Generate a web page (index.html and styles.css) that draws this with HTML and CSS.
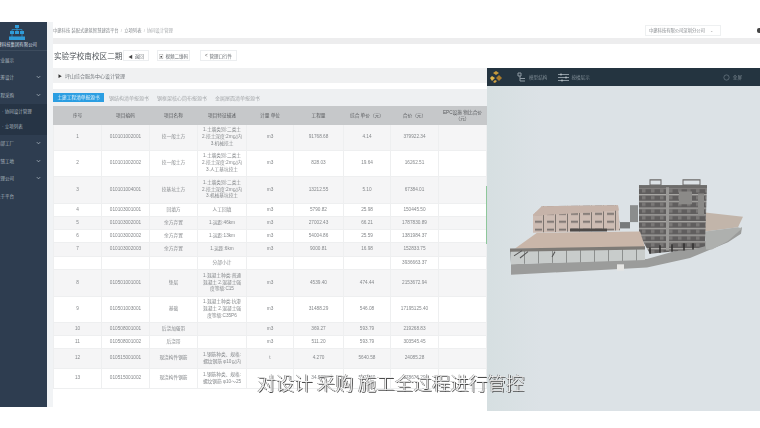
FILE: index.html
```html
<!DOCTYPE html>
<html lang="zh">
<head>
<meta charset="utf-8">
<title>实验学校南校区二期</title>
<link rel="stylesheet" href="styles.css">
</head>
<body>
<div class="screen">
  <div class="app">
    <aside class="sidebar">
      <div class="brand">
        <svg class="brand-mark" viewBox="0 0 18 17"><path d="M7 1h4v3H7zM2 7h4v3H2zM7 7h4v3H7zM12 7h4v3h-4zM1 12.500h16v3.500H1z" fill="#2f9bd8"/><path d="M9 4v3M4 7V5.500h10V7M4 10v3M14 10v3" stroke="#2f9bd8" fill="none" stroke-width=".7"/></svg>
        <div class="brand-name">中建科技集团有限公司</div>
      </div>
      <nav class="menu">
        <div class="item">企业展示</div>
        <div class="item">统筹设计<svg class="chev" viewBox="0 0 6 4"><path d="M1 1l2 2 2-2" /></svg></div>
        <div class="item">工程采购<svg class="chev" viewBox="0 0 6 4"><path d="M1 1l2 2 2-2" /></svg></div>
        <div class="submenu">
          <div class="subitem">· 协同设计管理</div>
          <div class="subitem">· 立项列表</div>
        </div>
        <div class="item">构部工厂<svg class="chev" viewBox="0 0 6 4"><path d="M1 1l2 2 2-2" /></svg></div>
        <div class="item">智慧工地<svg class="chev" viewBox="0 0 6 4"><path d="M1 1l2 2 2-2" /></svg></div>
        <div class="item">管理公司<svg class="chev" viewBox="0 0 6 4"><path d="M1 1l2 2 2-2" /></svg></div>
        <div class="item">关于平台</div>
      </nav>
    </aside>
    <div class="gutter"></div>
    <main class="main">
      <header class="topbar">
        <div class="crumbs">中建科技 装配式建筑智慧建造平台 <i>/</i> 立项列表 <i>/</i> <span class="muted">协同设计管理</span></div>
        <div class="top-right">
          <div class="select">中建科技有限公司深圳分公司<span class="caret">⌄</span></div>
          <div class="avatar"></div>
        </div>
      </header>
      <div class="band"></div>
      <div class="workspace">
        <div class="title-row">
          <h1 class="title">实验学校南校区二期</h1>
          <button class="btn"><span class="btn-ico">◀</span>返回</button>
          <button class="btn wide"><span class="btn-ico">▣</span>视频二维码</button>
          <button class="btn wider"><span class="btn-ico">&lt;</span>管理口行件</button>
        </div>
        <div class="split">
          <section class="left">
            <div class="project-bar"><span class="arrow">▶</span>坪山综合服务中心设计管理</div>
            <div class="tabs">
              <div class="tab active">土建工程清单报源书</div>
              <div class="tab">钢结构清单报源书</div>
              <div class="tab">钢框架核心筒布报源书</div>
              <div class="tab">金属屋面清单报源书</div>
            </div>
            <div class="table-wrap">
              <table class="grid">
                <colgroup>
                  <col class="c-a"><col class="c-b"><col class="c-c"><col class="c-d"><col class="c-e"><col class="c-f"><col class="c-g"><col class="c-h"><col class="c-i">
                </colgroup>
                <thead>
                  <tr class="rh"><th>序号</th><th>项目编码</th><th>项目名称</th><th>项目特征描述</th><th>计量 单位</th><th>工程量</th><th>综合 单价（元）</th><th>合价（元）</th><th>EPC设施 物比合价（元）</th></tr>
                </thead>
                <tbody>
                  <tr class="r3"><td>1</td><td>010101002001</td><td>挖一般土方</td><td>1.土壤类别:二类土<br>2.挖土深度:2m以内<br>3.机械挖土</td><td>m3</td><td>91768.68</td><td>4.14</td><td>379922.34</td><td></td></tr>
                  <tr class="r3"><td>2</td><td>010101002002</td><td>挖一般土方</td><td>1.土壤类别:二类土<br>2.挖土深度:2m以内<br>3.人工基坑挖土</td><td>m3</td><td>828.03</td><td>19.64</td><td>16262.51</td><td></td></tr>
                  <tr class="r3b"><td>3</td><td>010101004001</td><td>挖基坑土方</td><td>1.土壤类别:二类土<br>2.挖土深度:2m以内<br>3.机械基坑挖土</td><td>m3</td><td>13212.55</td><td>5.10</td><td>67384.01</td><td></td></tr>
                  <tr class="r1"><td>4</td><td>010103001001</td><td>回填方</td><td>人工回填</td><td>m3</td><td>5790.82</td><td>25.98</td><td>150445.50</td><td></td></tr>
                  <tr class="r1"><td>5</td><td>010103002001</td><td>余方弃置</td><td>1.运距:46km</td><td>m3</td><td>27002.43</td><td>66.21</td><td>1787830.89</td><td></td></tr>
                  <tr class="r1"><td>6</td><td>010103002002</td><td>余方弃置</td><td>1.运距:13km</td><td>m3</td><td>54004.86</td><td>25.59</td><td>1381984.37</td><td></td></tr>
                  <tr class="r1b"><td>7</td><td>010103002003</td><td>余方弃置</td><td>1.运距:6km</td><td>m3</td><td>9000.81</td><td>16.98</td><td>152833.75</td><td></td></tr>
                  <tr class="r1"><td></td><td></td><td></td><td>分部小计</td><td></td><td></td><td></td><td>3936663.37</td><td></td></tr>
                  <tr class="r3b"><td>8</td><td>010501001001</td><td>垫层</td><td>1.混凝土种类:普通<br>混凝土 2.混凝土强<br>度等级:C15</td><td>m3</td><td>4539.40</td><td>474.44</td><td>2153672.94</td><td></td></tr>
                  <tr class="r3"><td>9</td><td>010501003001</td><td>基础</td><td>1.混凝土种类:抗渗<br>混凝土 2.混凝土强<br>度等级:C35P6</td><td>m3</td><td>31488.29</td><td>546.08</td><td>17195125.40</td><td></td></tr>
                  <tr class="r1"><td>10</td><td>010508001001</td><td>后浇加强带</td><td></td><td>m3</td><td>369.27</td><td>593.79</td><td>219268.83</td><td></td></tr>
                  <tr class="r1"><td>11</td><td>010508001002</td><td>后浇带</td><td></td><td>m3</td><td>511.20</td><td>593.79</td><td>303545.45</td><td></td></tr>
                  <tr class="r2"><td>12</td><td>010515001001</td><td>现浇构件钢筋</td><td>1.钢筋种类、规格:<br>螺纹钢筋 φ10以内</td><td>t</td><td>4.270</td><td>5640.58</td><td>24085.28</td><td></td></tr>
                  <tr class="r2"><td>13</td><td>010515001002</td><td>现浇构件钢筋</td><td>1.钢筋种类、规格:<br>螺纹钢筋 φ10～25</td><td>t</td><td>34.880</td><td>5122.60</td><td>178676.29</td><td></td></tr>
                </tbody>
              </table>
              <div class="scroll-mark"></div>
            </div>
          </section>
          <section class="viewer">
            <div class="viewer-bar">
              <svg class="cube" viewBox="0 0 14 14"><path d="M7 1l3 2-3 2-3-2z" fill="#c79a3a"/><path d="M3 6l3 2-3 3-2-3z" fill="#e0b54a"/><path d="M10 5l3 3-3 3-3-3z" fill="#a87b2c"/><path d="M6 10l2 1-2 2-2-1z" fill="#d2a344"/></svg>
              <div class="tool first"><svg class="tool-ico" viewBox="0 0 9 11"><path d="M1 1h3v3H1zM3 4v5h5M3 6.500h5" fill="none" stroke="#8e9aa3" stroke-width="1"/></svg>模型结构</div>
              <div class="tool"><svg class="tool-ico wide-ico" viewBox="0 0 11 9"><path d="M0 1.500h11M0 4.500h11M0 7.500h11" stroke="#8e9aa3" stroke-width="1"/><path d="M3 .5v2M8 3.500v2M4 6.500v2" stroke="#cfd6da" stroke-width="1"/></svg>按楼层示</div>
              <div class="tool end"><svg class="tool-ico round" viewBox="0 0 8 8"><circle cx="4" cy="4" r="3" fill="none" stroke="#6f7d87" stroke-width=".8"/></svg>全屏</div>
            </div>
            <div class="stage">
              <svg class="model" viewBox="487 86 273 325" preserveAspectRatio="none">
                <defs>
                  <pattern id="floors" width="9" height="6.400" patternUnits="userSpaceOnUse" x="639" y="199">
                    <rect width="9" height="6.400" fill="#605e5e"/>
                    <rect y="0" width="9" height="1.300" fill="#a9a8a5"/>
                    <rect x="3" y="2" width="3.500" height="3" fill="#7b7978"/>
                  </pattern>
                  <pattern id="pinkfloors" width="12" height="7.500" patternUnits="userSpaceOnUse" x="533" y="222">
                    <rect width="12" height="7.500" fill="#cdbcb3"/>
                    <rect x="2" y="1.500" width="7" height="1.500" fill="#6a6562"/>
                    <rect x="10" width="1" height="7.500" fill="#7d7570"/>
                  </pattern>
                  <pattern id="glass" width="14" height="14" patternUnits="userSpaceOnUse" x="524" y="258">
                    <rect width="14" height="14" fill="#c8cccb"/>
                    <rect x="0" width="1" height="14" fill="#8c8f8e"/>
                  </pattern>
                </defs>
                <path class="b-base" d="M511 272L647 267 692 255 742 237 741 243 728 251 690 266 647 275 511 282z"/>
                <path d="M533 225L542 217 618 216 620 240 533 242z" fill="url(#pinkfloors)"/>
                <path d="M533 225L542 217 618 216 619 221 533 226z" fill="#c6b3a9"/>
                <path d="M570 238h37v3h-37z" fill="#4e4a48"/>
                <path d="M630 216h8v16h-8z" fill="#8b8d8d"/>
                <path d="M620 232h10v6h-10z" fill="#777a7b"/>
                <path d="M705 223L743 227 738 237 705 241z" fill="#c2b5aa"/>
                <path d="M705 241L738 237 742 238 728 250 712 258 706 258z" fill="#aeb0ae"/>
                <path d="M650 192h11v5h-11zM683 192h17v5h-17z" fill="none" stroke="#6a6968" stroke-width="1"/>
                <path d="M639 197L707 197 705 255 693 258 650 262 639 244z" fill="url(#floors)"/>
                <path d="M639 197h68v3h-68z" fill="#6d6c6b"/>
                <path d="M666 199h3v60h-3z" fill="#9a9997"/>
                <path d="M679 203h13v12h-13zM698 205h6v20h-6z" fill="#8b8a88"/>
                <path d="M515 257L537 242 640 241 645 256z" fill="#c9b6a9"/>
                <path d="M510 258L645 256 645 268 511 272z" fill="url(#glass)"/>
                <path d="M510 257L645 255 645 258 510 260z" fill="#7d7a76"/>
                <path d="M514 264l8-5M520 266l8-6M552 265l3-5" stroke="#555" stroke-width="1" fill="none"/>
                <path d="M617 272h7v6h-7z" fill="#e6e6e4"/>
                <path d="M650 262v-6M660 261v-7M672 260v-7M684 259v-7M693 258v-6" stroke="#2f2e2e" stroke-width="1.500"/>
              </svg>
            </div>
          </section>
        </div>
      </div>
    </main>
  </div>
  <div class="caption">对设计 采购 施工全过程进行管控</div>
</div>
</body>
</html>
```

FILE: styles.css
```css
* { box-sizing: border-box; }
html, body { margin: 0; height: 100%; background: #fff; }
body { font-family: "Liberation Sans", "Noto Sans CJK SC", sans-serif; overflow: hidden; }

.screen { position: relative; width: 760px; height: 428px; padding-top: 22px; overflow: hidden; filter: blur(.6px); }
.app { display: flex; height: 389px; }

.sidebar { width: 47px; height: 385px; flex: none; background: #2e3d50; color: #a9b4be; overflow: hidden; }
.brand { height: 29px; padding-top: 2px; border-bottom: 1px solid #3d4c5e; display: flex; flex-direction: column; align-items: flex-start; }
.brand-mark { width: 18px; height: 17px; margin-left: 8px; flex: none; }
.brand-name { margin-left: -7px; font-size: 4.400px; line-height: 8px; white-space: nowrap; color: #d7dde2; }
.item { height: 17.500px; display: flex; align-items: center; justify-content: space-between; padding: 0 6px 0 0; text-indent: -4px; font-size: 4.500px; white-space: nowrap; }
.chev { width: 5px; height: 4px; fill: none; stroke: #a8b3bd; stroke-width: 1; }
.submenu { background: #263445; height: 31px; }
.subitem { height: 15px; line-height: 15px; padding-left: 2px; font-size: 4.500px; }

.gutter { width: 6px; height: 385px; flex: none; background: #f1f3f5; }
.main { flex: 1; min-width: 0; display: flex; flex-direction: column; }

.topbar { height: 16px; flex: none; display: flex; align-items: center; justify-content: space-between; font-size: 4.300px; color: #85898d; }
.crumbs i { font-style: normal; color: #bbb; margin: 0 1px; }
.muted { color: #a8abae; }
.top-right { display: flex; align-items: center; }
.select { width: 76px; height: 11px; line-height: 10px; padding-left: 3px; border: 1px solid #eef0f1; display: flex; justify-content: space-between; white-space: nowrap; padding-right: 7px; }
.caret { color: #999; }
.avatar { width: 3px; height: 5px; margin-left: 36px; background: #444; border-radius: 2px 0 0 2px; }
.band { height: 6px; flex: none; background: #ededee; }

.workspace { flex: 1; min-height: 0; display: flex; flex-direction: column; }
.title-row { height: 24px; flex: none; display: flex; align-items: center; padding-left: 1px; padding-bottom: 1px; }
.title { margin: 0; font-size: 7.600px; font-weight: 400; color: #4f5459; white-space: nowrap; width: 69px; }
.btn { height: 11px; width: 26px; padding: 0; margin-right: 8px; border: 1px solid #eceef0; background: #fff; font: inherit; font-size: 4.500px; color: #61666b; display: flex; align-items: center; justify-content: center; }
.btn.wide { width: 33px; margin-right: 10px; }
.btn.wider { width: 37px; }
.btn-ico { margin-right: 2px; color: #444; }

.split { flex: 1; min-height: 0; display: flex; }
.left { width: 434px; flex: none; }
.project-bar { height: 15px; background: #f0f1f2; display: flex; align-items: center; padding-left: 5px; font-size: 5px; color: #71767b; margin-bottom: 6px; }
.arrow { font-size: 4px; color: #333; margin-right: 3px; }
.tabs { height: 17px; background: #eef0f2; display: flex; align-items: center; gap: 5px; font-size: 5px; color: #a6a9ac; }
.tab { white-space: nowrap; padding-right: 3px; }
.tab.active { width: 51px; height: 9px; padding: 0; line-height: 9px; font-size: 4.700px; background: #2b9ee2; color: #e6f4fb; text-align: center; }

.table-wrap { position: relative; }
.grid { width: 433px; border-collapse: collapse; table-layout: fixed; font-size: 4.700px; line-height: 6.700px; color: #85888b; text-align: center; }
.grid th, .grid td { padding: 0; border: 1px solid #eeeff0; vertical-align: middle; font-weight: 400; }
.grid th { background: #c6c8ca; border-color: #c6c8ca; color: #5a5c5f; line-height: 6px; }
.rh { height: 18px; }
.r3 { height: 26px; }
.r3b { height: 27px; }
.r2 { height: 20px; }
.r1 { height: 13px; }
.r1b { height: 14px; }
.grid tbody tr:nth-child(odd) td { background: #f5f5f6; }
.c-a, .c-b, .c-c { width: 48px; }
.c-d { width: 49px; }
.c-e { width: 47px; }
.c-f { width: 50px; }
.c-g { width: 47px; }
.c-h { width: 48px; }
.c-i { width: 48px; }
.scroll-mark { position: absolute; right: 0; top: 80px; width: 1px; height: 58px; background: #8ec79a; }

.viewer { flex: 1; min-width: 0; height: 343px; display: flex; flex-direction: column; background: #dce2e6; }
.viewer-bar { height: 18px; flex: none; display: flex; align-items: center; padding-left: 2px; background: #243440; color: #7f8c95; font-size: 4.600px; }
.cube { width: 14px; height: 14px; }
.tool { display: flex; align-items: center; white-space: nowrap; margin-left: 11px; }
.tool.first { margin-left: 14px; }
.tool.end { margin-left: auto; margin-right: 18px; }
.tool-ico { width: 9px; height: 11px; margin-right: 3px; }
.wide-ico { width: 11px; height: 9px; margin-right: 2px; }
.round { width: 7px; height: 7px; }
.stage { flex: 1; min-height: 0; background: linear-gradient(90deg, #d6dfe1, #dce2e6 20%); }
.model { display: block; width: 100%; height: 343px; margin-top: -18px; }
.b-base { fill: #9b9c9b; }

.caption { position: absolute; left: 257px; top: 371px; font-size: 18.500px; line-height: 22px; white-space: nowrap; color: #f3f3f3; text-shadow: 1px 1px 0 #4c4c4c, -.5px -.5px 0 #6b6b6b; font-family: "Noto Sans CJK SC", sans-serif; font-weight: 300; }
```
